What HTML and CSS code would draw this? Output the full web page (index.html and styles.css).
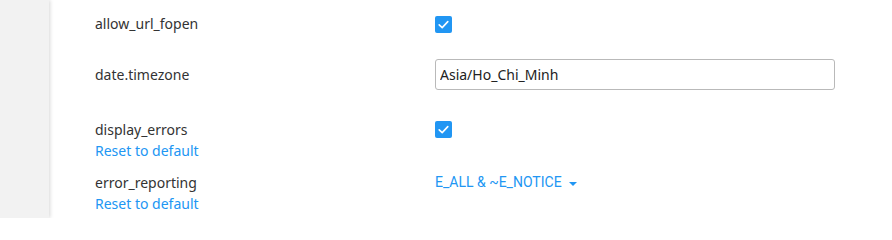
FILE: index.html
```html
<!DOCTYPE html>
<html>
<head>
<meta charset="utf-8">
<link rel="stylesheet" href="styles.css">
</head>
<body>
<div class="layout">
  <aside class="sidebar"></aside>
  <main class="content">
    <div class="row row-first">
      <div class="label"><div class="name">allow_url_fopen</div></div>
      <div class="value"><span class="check"><svg viewBox="0 0 17 17" width="17" height="17"><path d="M4.2 8.8 L7.2 11.6 L12.8 5.6" fill="none" stroke="#fff" stroke-width="1.6" stroke-linecap="round" stroke-linejoin="round"/></svg></span></div>
    </div>
    <div class="row row-input">
      <div class="label"><div class="name">date.timezone</div></div>
      <div class="value"><input class="text" type="text" value="Asia/Ho_Chi_Minh"></div>
    </div>
    <div class="row row-third">
      <div class="label"><div class="name">display_errors</div><a class="reset" href="#">Reset to default</a></div>
      <div class="value"><span class="check"><svg viewBox="0 0 17 17" width="17" height="17"><path d="M4.2 8.8 L7.2 11.6 L12.8 5.6" fill="none" stroke="#fff" stroke-width="1.6" stroke-linecap="round" stroke-linejoin="round"/></svg></span></div>
    </div>
    <div class="row row-fourth">
      <div class="label"><div class="name">error_reporting</div><a class="reset" href="#">Reset to default</a></div>
      <div class="value"><span class="dropdown">E_ALL &amp; ~E_NOTICE<span class="caret"></span></span></div>
    </div>
  </main>
</div>
</body>
</html>
```

FILE: styles.css
```css
html, body {
  margin: 0;
  padding: 0;
  background: #fff;
  height: 100%;
}
.layout {
  display: flex;
  height: 218px;
  overflow: hidden;
}
.sidebar {
  width: 49px;
  flex: none;
  background: #f2f2f2;
  box-shadow: 1px 0 4px rgba(0, 0, 0, 0.16);
  position: relative;
  z-index: 1;
}
.content {
  flex: 1;
  padding-left: 46px;
  font-family: "Noto Sans", "Open Sans", sans-serif;
  font-size: 14px;
  line-height: 21px;
  color: #333;
}
.row {
  display: grid;
  grid-template-columns: 340px 400px;
}
.row-first { margin-top: 13px; }
.row-input { margin-top: 25px; align-items: center; }
.row-third { margin-top: 29px; }
.row-fourth { margin-top: 11px; }
.label {
  display: flex;
  flex-direction: column;
}
.reset {
  color: #2196f3;
  text-decoration: none;
}
.value {
  display: flex;
  align-items: flex-start;
}
.check {
  display: block;
  width: 17px;
  height: 17px;
  margin-top: 2px;
  border-radius: 2px;
  background: #2196f3;
}
.check svg { display: block; }
.row-first .check { margin-top: 3px; }
.text {
  box-sizing: border-box;
  width: 400px;
  height: 31px;
  margin: 0;
  padding: 0 4px;
  border: 1px solid #b9b9b9;
  border-radius: 3px;
  font-family: "Noto Sans", "Open Sans", sans-serif;
  font-size: 14px;
  color: #222;
  background: #fff;
  outline: none;
}
.dropdown {
  display: flex;
  align-items: center;
  font-family: Roboto, "Noto Sans", sans-serif;
  font-size: 14px;
  color: #2196f3;
}
.caret {
  display: block;
  width: 0;
  height: 0;
  margin-left: 7px;
  margin-top: 2px;
  border-top: 4px solid #2196f3;
  border-left: 4px solid transparent;
  border-right: 4px solid transparent;
}
```
